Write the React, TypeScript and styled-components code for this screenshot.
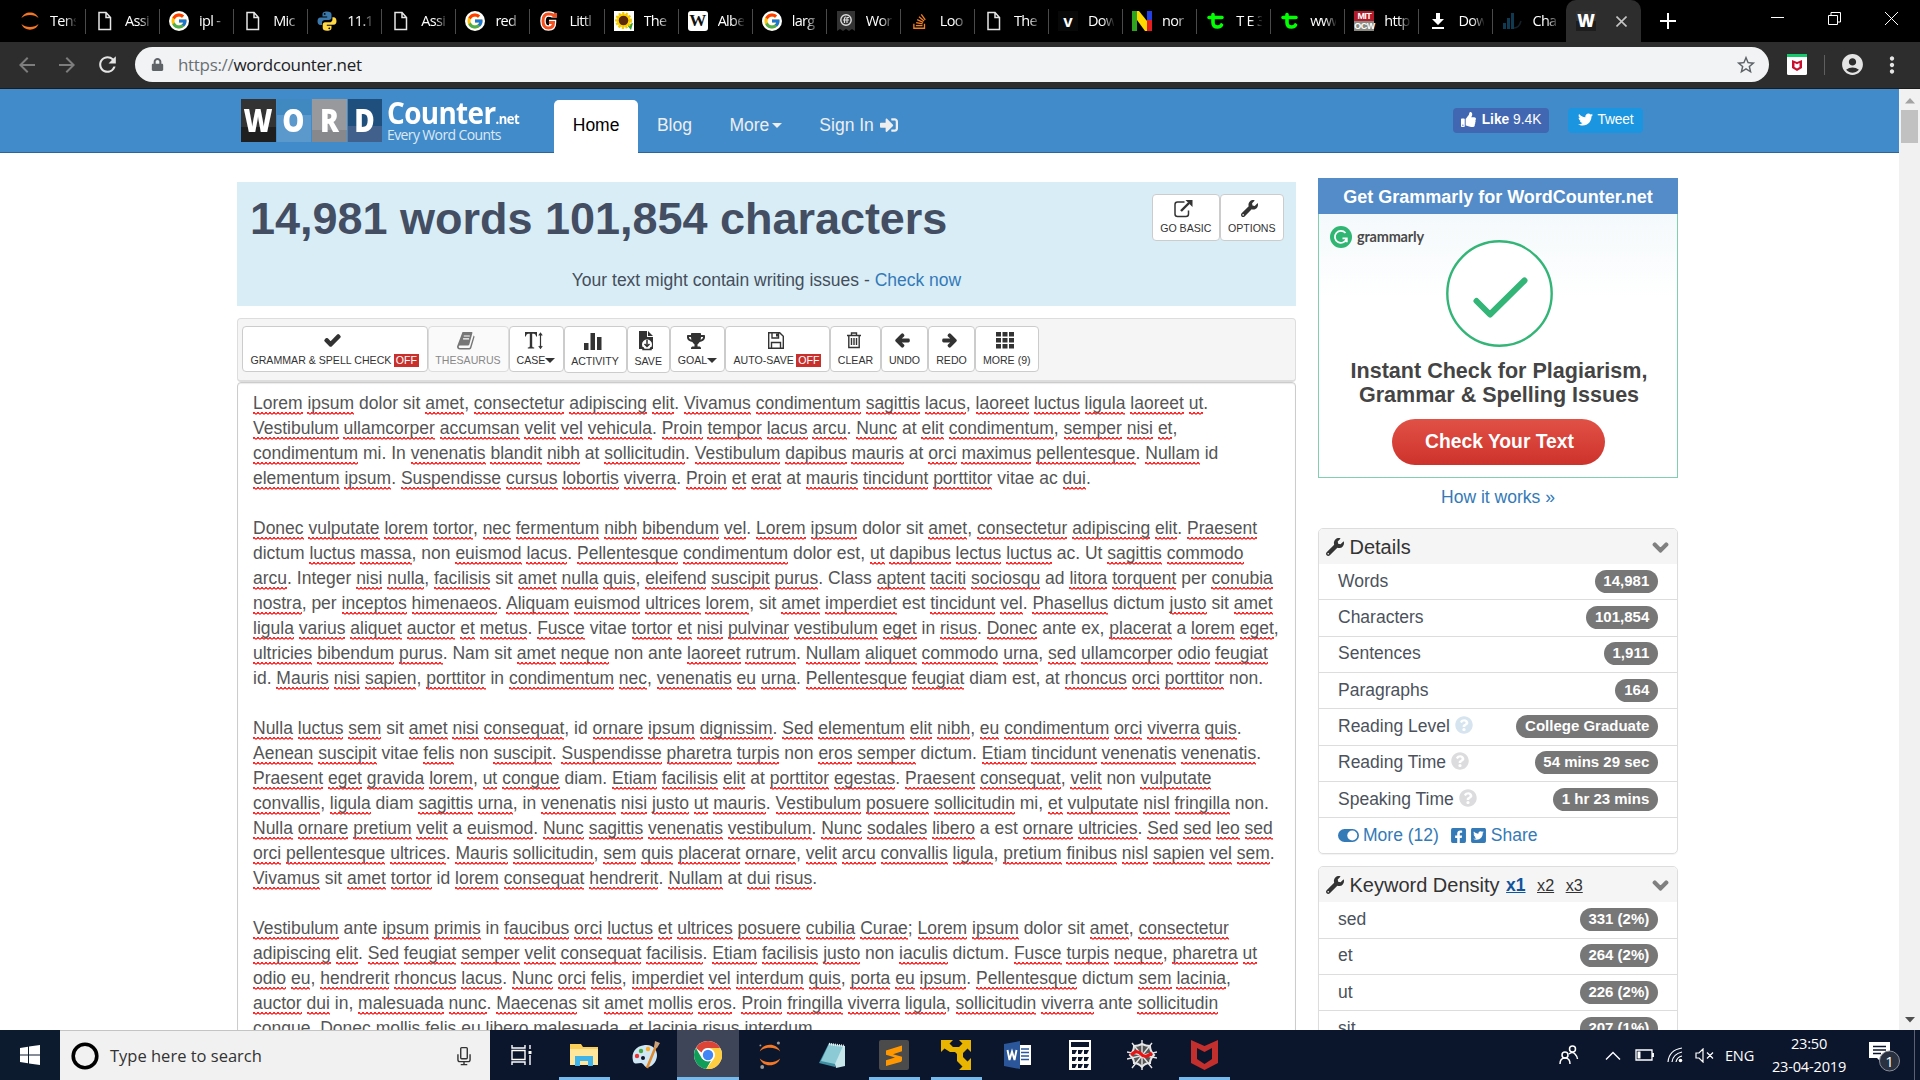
import React from "react";
import styled, { createGlobalStyle, css } from "styled-components";
import {
  FaCheck, FaTrophy, FaArrowLeft, FaArrowRight, FaWrench, FaChevronDown, FaQuestionCircle,
  FaFacebookSquare, FaTwitterSquare, FaTwitter, FaThumbsUp, FaStackOverflow, FaSignInAlt,
  FaLock,
} from "react-icons/fa";
import { FcGoogle } from "react-icons/fc";
import { MdAccountCircle, MdRefresh, MdStarBorder, MdArrowBack, MdArrowForward, MdMoreVert } from "react-icons/md";

const sans = `"Liberation Sans", Arial, sans-serif`;
const ui = `"Open Sans", "Noto Sans", sans-serif`;

const Global = createGlobalStyle`
  * { box-sizing: border-box; }
  html, body { margin: 0; padding: 0; overflow: hidden; background: #fff; }
  body { font-family: ${sans}; }
  svg { display: block; flex: none; }
`;

const Screen = styled.div`
  width: 1920px;
  height: 1080px;
  display: flex;
  flex-direction: column;
  overflow: hidden;
`;

/* ---------- browser chrome ---------- */
const TabStrip = styled.div`
  height: 42px;
  flex: none;
  background: #000;
  display: flex;
  align-items: stretch;
`;
const Tab = styled.div<{ $first?: boolean; $last?: boolean }>`
  width: ${(p) => (p.$first ? 86 : p.$last ? 72.5 : 74.08)}px;
  flex: none;
  padding-left: ${(p) => (p.$first ? 20 : 9)}px;
  display: flex;
  align-items: center;
  gap: 10px;
  background: linear-gradient(#4a4a4a, #4a4a4a) right 9px / 1px 25px no-repeat;
  ${(p) => p.$last && css`background: none;`}
`;
const TabIcon = styled.div`
  width: 20px;
  height: 20px;
  flex: none;
  display: flex;
  align-items: center;
  justify-content: center;
`;
const TabText = styled.div`
  width: 26px;
  overflow: hidden;
  white-space: nowrap;
  color: #fff;
  font: 14.5px/20px ${ui};
  letter-spacing: -0.7px;
  mask-image: linear-gradient(90deg, #000 55%, transparent 105%);
`;
const ActiveTab = styled.div`
  width: 75px;
  flex: none;
  background: #2d2d2d;
  border-radius: 10px 10px 0 0;
  display: flex;
  align-items: center;
  padding-left: 10px;
  gap: 20px;
`;
const WFavicon = styled.div`
  width: 20px;
  height: 20px;
  background: linear-gradient(#333 50%, #1d1d1d 50%);
  color: #fff;
  font: 800 17px/20px ${ui};
  text-align: center;
`;
const NewTab = styled.div`
  width: 54px;
  display: flex;
  align-items: center;
  justify-content: center;
`;
const WinButtons = styled.div`
  flex: 1;
  display: flex;
  justify-content: flex-end;
  height: 37px;
`;
const WinButton = styled.div`
  width: 57px;
  display: flex;
  align-items: center;
  justify-content: center;
`;
const AddressBar = styled.div`
  height: 47px;
  flex: none;
  background: #2d2d2d;
  border-bottom: 1px solid #1c1c1c;
  display: flex;
  align-items: center;
  padding: 0 0 1px 15px;
  color: #e4e4e4;
`;
const NavIcon = styled.div<{ $w: number; $c?: string }>`
  width: ${(p) => p.$w}px;
  flex: none;
  color: ${(p) => p.$c || "#e4e4e4"};
`;
const Omnibox = styled.div`
  width: 1634px;
  height: 35px;
  flex: none;
  border-radius: 18px;
  background: #f1f3f4;
  display: flex;
  align-items: center;
  padding: 0 12px 0 16px;
  color: #5f6368;
`;
const Url = styled.div`
  flex: 1;
  margin-left: 14px;
  font: 17px/24px ${ui};
  letter-spacing: -0.32px;
  color: #6b6f74;
  b { font-weight: 400; color: #202124; }
`;
const Extensions = styled.div`
  flex: 1;
  display: flex;
  align-items: center;
  padding-left: 18px;
`;
const VRule = styled.div`
  width: 1px;
  height: 20px;
  margin: 0 15px 0 17px;
  background: #5f5f5f;
`;

/* ---------- page ---------- */
const Viewport = styled.div`
  height: 941px;
  flex: none;
  display: flex;
  overflow: hidden;
`;
const Page = styled.div`
  width: 1899px;
  height: 941px;
  overflow: hidden;
  background: #fff;
`;
const ScrollTrack = styled.div`
  width: 21px;
  background: #f1f1f1;
  display: flex;
  flex-direction: column;
  align-items: center;
  padding: 9px 0 7px;
`;
const Thumb = styled.div`
  width: 17px;
  height: 33px;
  margin: 6px 0 auto;
  background: #c1c1c1;
`;
const Navbar = styled.div`
  height: 64px;
  background: #428bca;
  border-bottom: 1px solid #2c6699;
  padding-left: 241px;
  display: flex;
`;
const Logo = styled.div`
  width: 313px;
  margin-top: 10px;
  height: 44px;
  display: flex;
`;
const LogoBox = styled.div<{ $a: string; $b: string; $s: number }>`
  width: 34.5px;
  margin-right: 1px;
  height: 43px;
  background: linear-gradient(${(p) => p.$a} ${(p) => p.$s}%, ${(p) => p.$b} ${(p) => p.$s}%);
  color: #fff;
  font: 800 31px/42px ${ui};
  display: flex;
  justify-content: center;
  span { transform: scaleX(0.9); }
`;
const LogoWords = styled.div`
  margin-left: 4px;
  color: #fff;
  white-space: nowrap;
`;
const LogoTop = styled.div`
  font: 700 30px/28px ${ui};
  letter-spacing: -0.7px;
  height: 29px;
  transform: scaleX(0.93);
  transform-origin: left;
  span { font-size: 14px; letter-spacing: -0.5px; }
`;
const LogoSub = styled.div`
  font: 14px/14px ${ui};
  letter-spacing: -0.62px;
  color: #dce9f5;
`;
const NavTab = styled.div<{ $active?: boolean }>`
  height: 53px;
  margin-top: 11px;
  padding: 0 18.75px 3px;
  font-size: 17.5px;
  display: flex;
  align-items: center;
  white-space: nowrap;
  ${(p) =>
    p.$active
      ? css`background: #fff; color: #000; border-radius: 5px 5px 0 0;`
      : css`color: #eee;`}
`;
const Caret = styled.i<{ $s?: number }>`
  display: inline-block;
  border: ${(p) => p.$s || 5}px solid transparent;
  border-top-color: currentColor;
  border-bottom: 0;
`;
const Social = styled.div`
  margin: 19px 0 0 auto;
  padding-right: 256px;
  display: flex;
  gap: 19px;
`;
const SocialButton = styled.div<{ $bg: string; $w: number }>`
  width: ${(p) => p.$w}px;
  height: 25px;
  border-radius: 4px;
  background: ${(p) => p.$bg};
  color: #fff;
  display: flex;
  align-items: center;
  justify-content: center;
  gap: ${(p) => (p.$w > 80 ? 6 : 5)}px;
  font-size: 13.75px;
  letter-spacing: ${(p) => (p.$w > 80 ? 0 : -0.15)}px;
  line-height: 22px;
  white-space: nowrap;
  padding-bottom: 2px;
`;
const Columns = styled.div`
  display: flex;
  padding-left: 237px;
  gap: 22px;
`;
const Main = styled.div`
  width: 1059px;
  padding-top: 29px;
`;
const Counts = styled.div`
  height: 124px;
  background: #d9edf7;
  padding: 12px 12px 0 13px;
`;
const CountsTop = styled.div`
  display: flex;
  justify-content: space-between;
  height: 73.5px;
`;
const Heading = styled.div`
  font-weight: 700;
  font-size: 45px;
  line-height: 50px;
  letter-spacing: -0.02px;
  color: #444e63;
  white-space: nowrap;
`;
const Issues = styled.div`
  text-align: center;
  font-size: 17.5px;
  line-height: 25px;
  padding-right: 1px;
  color: #444e5a;
`;
const Link = styled.span`
  color: #337ab7;
`;
const ButtonRow = styled.div`
  display: flex;
  align-items: flex-start;
`;
const ToolButton = styled.div<{ $w: number; $h?: number; $off?: boolean }>`
  width: ${(p) => p.$w}px;
  height: ${(p) => p.$h || 46}px;
  flex: none;
  background: ${(p) => (p.$off ? "#fafafa" : "#fff")};
  color: ${(p) => (p.$off ? "#888" : "#333")};
  border: 1px solid ${(p) => (p.$off ? "#ddd" : "#ccc")};
  border-radius: 4px;
  display: flex;
  flex-direction: column;
  align-items: center;
  padding-top: 4px;
`;
const ToolIcon = styled.div<{ $bold?: boolean }>`
  height: 19px;
  margin-right: 4px;
  display: flex;
  align-items: center;
  ${(p) => p.$bold && css`svg { stroke: #333; stroke-width: 50px; overflow: visible; }`}
`;
const ToolLabel = styled.div<{ $up?: boolean }>`
  margin-top: auto;
  padding-bottom: ${(p) => (p.$up ? 5 : 4)}px;
  font-size: 10.6px;
  line-height: 13px;
  display: flex;
  align-items: center;
  white-space: nowrap;
`;
const OffTag = styled.span`
  background: #c9302c;
  color: #fff;
  margin-left: 2.5px;
  padding: 0 2px;
  line-height: 13.5px;
`;
const Toolbar = styled.div`
  margin-top: 12px;
  height: 64px;
  background: #f5f5f5;
  border: 1px solid #ddd;
  border-bottom: 2px solid #ddd;
  border-radius: 4px;
  padding: 7px 0 0 4px;
`;
const Editor = styled.div`
  height: 720px;
  border: 1px solid #ccc;
  border-radius: 4px 4px 0 0;
  box-shadow: inset 0 1px 1px rgba(0, 0, 0, 0.08);
  padding: 8px 0 0 15px;
  color: #555;
  font-size: 17.5px;
  line-height: 25px;
`;
const Line = styled.div`
  height: 25px;
  white-space: pre;
`;
const Misspelt = styled.span`
  padding-bottom: 2px;
  background:
    linear-gradient(#ff3a3a, #ff3a3a) 0 calc(100% - 1px) / 100% 1px no-repeat,
    linear-gradient(90deg, #ff2020 2px, transparent 2px) 0 calc(100% - 2px) / 4px 1px repeat-x,
    linear-gradient(90deg, transparent 2px, #ff8080 2px) 0 100% / 4px 1px repeat-x;
`;

/* ---------- sidebar ---------- */
const Side = styled.div`
  width: 360px;
  padding-top: 25px;
`;
const Ad = styled.div`
  height: 300px;
  border: 1px solid #80cfae;
  border-top: 0;
  background: linear-gradient(#f4f9fb 36px, #fff 120px);
`;
const AdTitle = styled.div`
  margin: 0 -1px;
  height: 36px;
  background: #538cc9;
  color: #fff;
  font-weight: 700;
  font-size: 18px;
  line-height: 38px;
  text-align: center;
`;
const AdBrand = styled.div`
  height: 26px;
  padding: 12px 0 0 11px;
  display: flex;
  gap: 5px;
  font: 700 14.5px/22px Lato, sans-serif;
  letter-spacing: -0.2px;
  color: #4a4a4a;
`;
const AdCircle = styled.div`
  height: 107px;
  display: flex;
  justify-content: center;
  padding-left: 3px;
`;
const AdHead = styled.div`
  margin-top: 12px;
  padding-left: 2px;
  text-align: center;
  font-weight: 700;
  font-size: 21.55px;
  line-height: 24px;
  color: #444;
  white-space: nowrap;
`;
const AdButton = styled.div`
  width: 213px;
  height: 46px;
  margin: 12px 0 0 73px;
  padding-left: 2px;
  border-radius: 23px;
  background: linear-gradient(#e15146, #cd322b);
  color: #fff;
  font-weight: 700;
  font-size: 19.3px;
  line-height: 45px;
  text-align: center;
`;
const HowItWorks = styled.div`
  height: 50px;
  padding-top: 6px;
  text-align: center;
  font-size: 17.5px;
  line-height: 26px;
  color: #337ab7;
`;
const Panel = styled.div`
  border: 1px solid #ddd;
  border-radius: 5px;
  overflow: hidden;
  margin-bottom: 12px;
  box-shadow: 0 1px 1px rgba(0, 0, 0, 0.05);
`;
const PanelHead = styled.div`
  height: 35px;
  background: #f5f5f5;
  color: #333;
  font-size: 20px;
  display: flex;
  align-items: center;
  padding: 1px 8px 0 7px;
  gap: 5.5px;
`;
const Chevron = styled(FaChevronDown)`
  color: #808080;
  stroke: #808080;
  stroke-width: 45px;
  overflow: visible;
`;
const DensityTab = styled.span<{ $on?: boolean }>`
  text-decoration: underline;
  font-size: ${(p) => (p.$on ? 17.5 : 16.2)}px;
  font-weight: ${(p) => (p.$on ? 700 : 400)};
  color: ${(p) => (p.$on ? "#0f549c" : "#333")};
  margin-left: ${(p) => (p.$on ? 1 : 6)}px;
  padding-top: 1px;
`;
const Spacer = styled.span`
  flex: 1;
`;
const Row = styled.div<{ $last?: boolean }>`
  height: ${(p) => (p.$last ? 35.2 : 36.32)}px;
  border-bottom: ${(p) => (p.$last ? 0 : 1)}px solid #ddd;
  padding: 0 19px 1px;
  display: flex;
  align-items: center;
  font-size: 17.5px;
  color: ${(p) => (p.$last ? "#337ab7" : "#4b525c")};
  white-space: nowrap;
`;
const Help = styled.span<{ $blue?: boolean }>`
  color: ${(p) => (p.$blue ? "#d6e4f0" : "#dcdcdf")};
  margin: -3px 0 0 5px;
`;
const Badge = styled.span`
  margin-left: auto;
  height: 23px;
  border-radius: 12px;
  padding: 0 8.75px;
  background: #777;
  color: #fff;
  font-weight: 700;
  font-size: 15px;
  line-height: 22.5px;
`;
const LinkIcon = styled.span<{ $l?: number; $r?: number }>`
  margin-left: ${(p) => p.$l || 0}px;
  margin-right: ${(p) => p.$r || 0}px;
`;

/* ---------- taskbar ---------- */
const Taskbar = styled.div`
  height: 50px;
  flex: none;
  background: #0b152c;
  display: flex;
  color: #fff;
`;
const Start = styled.div`
  width: 60px;
  background: #0d1b2f;
  display: flex;
  align-items: center;
  justify-content: center;
`;
const Search = styled.div`
  width: 430px;
  background: #f1f1f1;
  border-top: 1px solid #c4c4c4;
  display: flex;
  align-items: center;
  padding: 0 19px 0 11px;
  gap: 11px;
  font: 16.5px/24px ${ui};
  color: #333;
`;
const AppButton = styled.div<{ $w?: number; $on?: boolean; $open?: boolean }>`
  width: ${(p) => p.$w || 62}px;
  height: 50px;
  flex: none;
  display: flex;
  align-items: center;
  justify-content: center;
  background: ${(p) =>
    p.$on
      ? "linear-gradient(#76b9ed,#76b9ed) bottom / 100% 3px no-repeat, #3e4558"
      : p.$open
      ? "linear-gradient(#76b9ed,#76b9ed) bottom / 51px 3px no-repeat"
      : "none"};
`;
const Tray = styled.div`
  flex: 1;
  display: flex;
  align-items: center;
  justify-content: flex-end;
  font: 14.6px/22px ${ui};
  letter-spacing: -0.2px;
`;
const TrayItem = styled.div<{ $w: number }>`
  width: ${(p) => p.$w}px;
  display: flex;
  justify-content: center;
`;
const Clock = styled.div`
  width: 81px;
  text-align: center;
  white-space: nowrap;
  line-height: 23px;
  padding-bottom: 1px;
`;
const Notice = styled.div`
  width: 46.5px;
  display: flex;
  margin-left: 18px;
`;
const Edge = styled.div`
  width: 6px;
  height: 50px;
  border-left: 1px solid #5a6272;
`;

/* ---------- drawings ---------- */
const DocIcon = () => (
  <svg width="20" height="20" viewBox="0 0 20 20" fill="none" stroke="#e6e6e6" strokeWidth="1.5">
    <path d="M4 1.500h7l4.500 5v12H4z M11 1.500v5h4.500" />
  </svg>
);
const Jupyter = ({ s = 20, dots = false }: { s?: number; dots?: boolean }) => (
  <svg width={s} height={s} viewBox="0 0 20 20" fill="#f37726" overflow="visible">
    <path d="M1.500 7C4 -.5 16 -.5 18.500 7 14.500 3 5.500 3 1.500 7z" />
    <path d="M1.500 13c2.500 7.500 14.500 7.500 17 0-4 4-13 4-17 0z" />
    {dots && <g fill="#9a9a9a"><circle cx="17" cy="0" r="1.300" /><circle cx="3.500" cy="20" r="1.600" /><circle cx="2" cy="2" r=".8" /></g>}
  </svg>
);
const Python = () => (
  <svg width="20" height="20" viewBox="0 0 20 20">
    <path fill="#3b78ab" d="M10 .5C6.500.5 5.500 1.700 5.500 3.500V5.500H10.200v.9H3.500C1.500 6.400.5 8 .5 10.200S1.700 14 3.300 14H5v-2.300C5 9.800 6.300 8.900 8 8.900h4.200c1.400 0 2.300-1 2.300-2.300V3.500C14.500 1.500 13 .5 10 .5zM7.700 2a.9.900 0 110 1.800.9.900 0 010-1.800z" />
    <path fill="#ffd845" d="M10 19.700c3.500 0 4.500-1.200 4.500-3v-2H9.800v-.9h6.700c2 0 3-1.600 3-3.800S18.300 6.200 16.700 6.200H15.400v2.300c0 1.900-1.300 2.800-3 2.800H8c-1.400 0-2.300 1-2.300 2.300v3.100c0 2 1.300 3 4.300 3zm2.300-1.500a.9.900 0 110-1.800.9.900 0 010 1.800z" />
  </svg>
);
const Glyph = styled.div<{ $bg?: string; $c?: string; $f?: string; $round?: number }>`
  width: 20px;
  height: 20px;
  border-radius: ${(p) => p.$round || 0}px;
  background: ${(p) => p.$bg || "none"};
  color: ${(p) => p.$c || "#fff"};
  font: ${(p) => p.$f || `700 16px/20px ${sans}`};
  text-align: center;
  overflow: hidden;
  display: flex;
  align-items: center;
  justify-content: center;
`;
const GoogleTab = () => (
  <Glyph $bg="#fff" $round={10}><FcGoogle size={18} /></Glyph>
);
const Geeks = () => (
  <svg width="20" height="20" viewBox="0 0 20 20">
    <path d="M15 6.500V5Q14 3 9.500 3Q4 3 4 10t5.500 7q5 0 5-5.500H10" fill="none" stroke="#fff" strokeWidth="5.500" />
    <path d="M15 6.500V5Q14 3 9.500 3Q4 3 4 10t5.500 7q5 0 5-5.500H10M16.500 2v4.500" fill="none" stroke="#f4511e" strokeWidth="3" />
  </svg>
);
const Sunflower = () => (
  <svg width="20" height="20" viewBox="0 0 20 20">
    <rect width="20" height="20" fill="#fff" />
    <path d="M13 14l6-2-2 7z" fill="#2f9e2f" />
    <circle cx="9.500" cy="9.500" r="7" fill="#ffd900" stroke="#f4c900" strokeWidth="3" strokeDasharray="2 1.500" />
    <circle cx="9.500" cy="9.500" r="4.800" fill="#5c2a08" />
  </svg>
);
const Wol = () => (
  <svg width="18" height="20" viewBox="0 0 18 20">
    <path d="M0 0h18v20l-3-2-3 2-3-2-3 2-3-2-3 2z" fill="#333" />
    <circle cx="9" cy="9" r="5.200" fill="none" stroke="#ddd" strokeWidth="1.400" />
    <path d="M7.500 12V8q0-2 1.500-2M6 9h6M10 12V6.500h2" stroke="#ddd" fill="none" strokeWidth="1.200" />
  </svg>
);
const NIcon = () => (
  <svg width="20" height="20" viewBox="0 0 20 20">
    <path fill="#2fa51f" d="M0 0h5v20H0z" /><path fill="#ffd800" d="M5 0h2l8 10v10h-2L5 9z" />
    <path fill="#2340e6" d="M15 0h5v9h-5z" /><path fill="#e61e1e" d="M15 9h5v11h-5z" />
  </svg>
);
const Torrent = () => (
  <svg width="20" height="20" viewBox="0 0 20 20" fill="none" stroke="#0f0" strokeWidth="3.600" strokeLinecap="round">
    <path d="M7 3.500v8q0 4.500 4.500 4.500 3 0 4-2M3 6.500h13" />
  </svg>
);
const Mit = styled.div`
  width: 20px;
  height: 20px;
  color: #fff;
  font: 900 9px/10px ${sans};
  letter-spacing: -0.6px;
  text-align: center;
  background: linear-gradient(#b31b2b 50%, #8a8a80 50%);
`;
const Download = () => (
  <svg width="14" height="18" viewBox="0 0 14 18" fill="#fff"><path d="M5 1h4v6h4l-6 6-6-6h4zM1 15h12v2H1z" /></svg>
);
const Bars = () => (
  <svg width="20" height="18" viewBox="0 0 20 18"><path fill="#0f3a52" d="M1 11h3v6H1zM5 6h3v11H5zM9 1h3v16H9z" /><path stroke="#14202a" strokeWidth="1.500" d="M12 16q5 0 7-7" fill="none" /></svg>
);

const tabs: [React.ReactNode, string][] = [
  [<Jupyter />, "Tens"],
  [<DocIcon />, "Assi"],
  [<GoogleTab />, "ipl -"],
  [<DocIcon />, "Mic"],
  [<Python />, "11.1"],
  [<DocIcon />, "Assi"],
  [<GoogleTab />, "red"],
  [<Geeks />, "Littl"],
  [<Sunflower />, "The"],
  [<Glyph $bg="#fff" $c="#111" $round={3} $f={`700 17px/20px "Liberation Serif", serif`}>W</Glyph>, "Albe"],
  [<GoogleTab />, "larg"],
  [<Wol />, "Wor"],
  [<FaStackOverflow size={17} color="#f48024" />, "Loo"],
  [<DocIcon />, "The"],
  [<Glyph $bg="#080808" $f={`700 17px/19px ${sans}`}>v</Glyph>, "Dow"],
  [<NIcon />, "nor"],
  [<Torrent />, "T E 3"],
  [<Torrent />, "www"],
  [<Mit>MIT OCW</Mit>, "http"],
  [<Download />, "Dow"],
  [<Bars />, "Cha"],
];

const paragraphs = `Lorem ipsum dolor sit amet, consectetur adipiscing elit. Vivamus condimentum sagittis lacus, laoreet luctus ligula laoreet ut.
Vestibulum ullamcorper accumsan velit vel vehicula. Proin tempor lacus arcu. Nunc at elit condimentum, semper nisi et,
condimentum mi. In venenatis blandit nibh at sollicitudin. Vestibulum dapibus mauris at orci maximus pellentesque. Nullam id
elementum ipsum. Suspendisse cursus lobortis viverra. Proin et erat at mauris tincidunt porttitor vitae ac dui.

Donec vulputate lorem tortor, nec fermentum nibh bibendum vel. Lorem ipsum dolor sit amet, consectetur adipiscing elit. Praesent
dictum luctus massa, non euismod lacus. Pellentesque condimentum dolor est, ut dapibus lectus luctus ac. Ut sagittis commodo
arcu. Integer nisi nulla, facilisis sit amet nulla quis, eleifend suscipit purus. Class aptent taciti sociosqu ad litora torquent per conubia
nostra, per inceptos himenaeos. Aliquam euismod ultrices lorem, sit amet imperdiet est tincidunt vel. Phasellus dictum justo sit amet
ligula varius aliquet auctor et metus. Fusce vitae tortor et nisi pulvinar vestibulum eget in risus. Donec ante ex, placerat a lorem eget,
ultricies bibendum purus. Nam sit amet neque non ante laoreet rutrum. Nullam aliquet commodo urna, sed ullamcorper odio feugiat
id. Mauris nisi sapien, porttitor in condimentum nec, venenatis eu urna. Pellentesque feugiat diam est, at rhoncus orci porttitor non.

Nulla luctus sem sit amet nisi consequat, id ornare ipsum dignissim. Sed elementum elit nibh, eu condimentum orci viverra quis.
Aenean suscipit vitae felis non suscipit. Suspendisse pharetra turpis non eros semper dictum. Etiam tincidunt venenatis venenatis.
Praesent eget gravida lorem, ut congue diam. Etiam facilisis elit at porttitor egestas. Praesent consequat, velit non vulputate
convallis, ligula diam sagittis urna, in venenatis nisi justo ut mauris. Vestibulum posuere sollicitudin mi, et vulputate nisl fringilla non.
Nulla ornare pretium velit a euismod. Nunc sagittis venenatis vestibulum. Nunc sodales libero a est ornare ultricies. Sed sed leo sed
orci pellentesque ultrices. Mauris sollicitudin, sem quis placerat ornare, velit arcu convallis ligula, pretium finibus nisl sapien vel sem.
Vivamus sit amet tortor id lorem consequat hendrerit. Nullam at dui risus.

Vestibulum ante ipsum primis in faucibus orci luctus et ultrices posuere cubilia Curae; Lorem ipsum dolor sit amet, consectetur
adipiscing elit. Sed feugiat semper velit consequat facilisis. Etiam facilisis justo non iaculis dictum. Fusce turpis neque, pharetra ut
odio eu, hendrerit rhoncus lacus. Nunc orci felis, imperdiet vel interdum quis, porta eu ipsum. Pellentesque dictum sem lacinia,
auctor dui in, malesuada nunc. Maecenas sit amet mollis eros. Proin fringilla viverra ligula, sollicitudin viverra ante sollicitudin
congue. Donec mollis felis eu libero malesuada, et lacinia risus interdum.`.split("\n");

const known = new Set(
  "dolor sit est ac Ut Class ad per Integer dictum in In ante ex a diam at non mi id Nam vitae".split(" ")
);

const SpellLine = ({ text }: { text: string }) => (
  <Line>
    {text.split(/([A-Za-z]+)/).map((t, i) =>
      i % 2 && !known.has(t) ? <Misspelt key={i}>{t}</Misspelt> : t
    )}
  </Line>
);

const details: [string, string, string?][] = [
  ["Words", "14,981"],
  ["Characters", "101,854"],
  ["Sentences", "1,911"],
  ["Paragraphs", "164"],
  ["Reading Level", "College Graduate", "blue"],
  ["Reading Time", "54 mins 29 sec", "grey"],
  ["Speaking Time", "1 hr 23 mins", "grey"],
];
const density = [["sed", "331 (2%)"], ["et", "264 (2%)"], ["ut", "226 (2%)"], ["sit", "207 (1%)"]];

const BookIcon = () => (
  <svg width="18" height="18" viewBox="0 0 18 18">
    <path fill="#777" d="M5.500 0h9.200q1 0 .7 1L12.300 12.500q-.3 1-1.300 1H3q-1.300 0-1.300 1.200T3 16h9q.8 0 1-.8L16.600 3.500q1.200.5.9 1.600l-3.200 11q-.4 1.400-1.800 1.400H3Q0 17.500 0 14.500z" />
    <path stroke="#fff" strokeWidth="1.200" d="M6.800 4h6M6.100 6.800h6" />
  </svg>
);
const TextHeight = () => (
  <svg width="18" height="18" viewBox="0 0 18 18">
    <path fill="#333" d="M0 0h12v4.500h-.8q-.5-2.800-2.200-2.800H7.200v12.500q0 1.300 2 1.300v1H2.800v-1q2 0 2-1.300V1.700H3Q1.300 1.700.8 4.500H0z" />
    <path d="M15.500 2v13M13.800 3.500l1.700-2.200 1.700 2.200M13.800 14l1.700 2.200 1.700-2.200" fill="none" stroke="#333" strokeWidth="1.200" />
  </svg>
);
const Activity = () => (
  <svg width="18" height="19" viewBox="0 -1 18 19" fill="#333"><path d="M0 11h4.500v7H0zM6.500 1h4.500v17H6.500zM13 5h4.500v13H13z" /></svg>
);
const SaveDoc = () => (
  <svg width="16" height="20" viewBox="0 0 16 20">
    <path fill="#333" d="M1 0h8v6h6v12H1z M10 0l5 5h-5z" />
    <circle cx="9" cy="13.500" r="5" fill="#fff" /><path d="M9 9v6M6.500 13L9 15.500l2.500-2.500M5 16v2.500h8V16" fill="none" stroke="#333" strokeWidth="1.500" />
  </svg>
);
const Floppy = () => (
  <svg width="16" height="17" viewBox="0 0 16 17" fill="none" stroke="#333" strokeWidth="1.400">
    <path d="M.7.7h11l3.600 3.600v12H.7zM4 .7V6h6.500V.7M3.500 16v-5.500h9V16" /><path d="M8 1.500h2v3H8z" fill="#333" stroke="none" />
  </svg>
);
const Trash = () => (
  <svg width="14" height="17" viewBox="0 0 14 17" fill="none" stroke="#333" strokeWidth="1.400">
    <path d="M0 3.500h14M4.500 3V1h5v2M1.800 3.500v12h10.400v-12M4.500 6v7M7 6v7M9.500 6v7" />
  </svg>
);
const GridIcon = () => (
  <svg width="18" height="17" viewBox="0 0 18 17" fill="#333"><path d="M0 0h5v4.500H0zM6.500 0h5v4.500h-5zM13 0h5v4.500h-5zM0 6h5v4.500H0zM6.500 6h5v4.500h-5zM13 6h5v4.500h-5zM0 12h5v4.500H0zM6.500 12h5v4.500h-5zM13 12h5v4.500h-5z" /></svg>
);
const OpenIcon = () => (
  <svg width="19" height="18" viewBox="0 0 19 18" fill="none" stroke="#333" strokeWidth="1.500">
    <path d="M10.500 2H3.500Q1 2 1 4.500v9.500Q1 16.500 3.500 16.500h8.500q2.500 0 2.500-2.500V10.500" />
    <path d="M7 11L15 3" strokeWidth="2.400" /><path d="M11.500 0H18.500v7z" fill="#333" stroke="none" />
  </svg>
);
const ToggleIcon = () => (
  <svg width="21" height="13" viewBox="0 0 21 13"><rect width="21" height="13" rx="6.500" fill="#337ab7" /><circle cx="14.300" cy="6.500" r="5" fill="#fff" /></svg>
);

const apps: [React.ReactNode, { on?: boolean; open?: boolean }][] = [
  [<svg width="28" height="24" viewBox="0 0 28 24"><path fill="#f9cf5a" d="M0 1h11l2 3h15v18H0z" /><path fill="#ffe69a" d="M0 6h28v16H0z" /><path fill="#3fb3ea" d="M5 23V13h18v10h-5v-5h-8v5z" /></svg>, { open: true }],
  [<svg width="30" height="28" viewBox="0 0 30 28"><path fill="#cfe6f4" d="M14 4C4 5 0 12 2 20c1 4 5 2 8 2s3 5 7 4c6-1 9-7 9-12S22 3 14 4z" /><circle cx="6" cy="15" r="2.200" fill="#e33" /><circle cx="10" cy="10" r="2.200" fill="#4a4" /><circle cx="17" cy="8" r="2.200" fill="#fa2" /><circle cx="12" cy="17" r="2" fill="#0b152c" /><path d="M25 5L16 27" stroke="#e08a2e" strokeWidth="2.500" /><path d="M23 6l1-6 5 2-3 5z" fill="#c9a27a" /></svg>, {}],
  [<svg width="28" height="28" viewBox="0 0 28 28"><circle cx="14" cy="14" r="14" fill="#fff" /><path fill="#db4437" d="M14 0a14 14 0 0112.100 7H14a7 7 0 00-6.500 4.400L2 7A14 14 0 0114 0z" /><path fill="#0f9d58" d="M1.900 7a14 14 0 0010.300 20.900l6-10.400A7 7 0 017.900 17.500z" /><path fill="#ffcd40" d="M26.100 7H14a7 7 0 016 10.500L12.200 28A14 14 0 0026.100 7z" /><circle cx="14" cy="14" r="6.500" fill="#fff" /><circle cx="14" cy="14" r="5.200" fill="#4285f4" /></svg>, { on: true }],
  [<Jupyter s={24} dots />, {}],
  [<svg width="28" height="27" viewBox="0 0 28 27"><path d="M11 1L1 21l16 4L24 4z" fill="#3f8fa3" /><path d="M12 2l15 2v20l-9 2z" fill="#c7e6ea" /><path d="M11 2L3 19l14 3 8-18z" fill="#8ccbd6" /><path d="M11 2l15 2" stroke="#eee" strokeWidth="2.500" strokeDasharray="1 1" /></svg>, {}],
  [<svg width="30" height="30" viewBox="0 0 30 30"><rect width="30" height="30" rx="2" fill="#4b4b4b" /><path fill="#ff9800" d="M7 10.500L23 5.500v5.800l-9 2.900 9 2.600v3.200q0 1.500-1.500 2L7 26v-5.800l9-2.700-9-2.700z" /></svg>, { open: true }],
  [<svg width="30" height="30" viewBox="0 0 30 30"><path fill="#e9b500" d="M0 0h12l-3.500 3.500L12 7h6l3.500-3.500L18 0h12v12l-3.500-3.500L22 13v4l4.500 4.500L30 18v12H18l3.500-3.500L16 21v-7l-2-2H9L3.500 8.500 0 12z" /></svg>, { open: true }],
  [<svg width="28" height="28" viewBox="0 0 28 28"><path d="M14 4h13v20H14z" fill="#fff" /><path d="M17 8h8M17 11.500h8M17 15h8M17 18.500h8" stroke="#2b579a" strokeWidth="1.300" /><path d="M0 3l16-3v28L0 25z" fill="#2b579a" /><path d="M3.500 9l2 10L8 10.500 10.500 19l2-10" fill="none" stroke="#fff" strokeWidth="1.900" /></svg>, {}],
  [<svg width="22" height="30" viewBox="0 0 22 30"><path fill="#fff" d="M0 0h22v30H0z" /><path fill="#0b152c" d="M2 2h18v5H2zM3 10h5l-2 4H3zM9 10h5l-2 4H9zM15 10h5l-2 4h-3zM3 17h5l-2 4H3zM9 17h5l-2 4H9zM15 17h5l-2 4h-3zM3 24h5l-2 4H3zM9 24h5l-2 4H9zM15 24h5l-2 4h-3z" /></svg>, {}],
  [<svg width="30" height="30" viewBox="0 0 30 30" fill="none" stroke="#e6e6e6" strokeWidth="1.400"><path fill="#555" strokeWidth="2" d="M15 4q4 2 8 2 0 5 4 9-4 4-4 8-5 0-8 4-4-4-8-4 0-4-4-8 4-4 4-9 4 0 8-2z" /><path d="M15 0v30M0 12l30 6M0 19l30-7M5 3l20 25M25 3L5 28" /><path d="M4 15q6-6 10-1t11-1" stroke="#e11" strokeWidth="3.200" /></svg>, {}],
  [<svg width="27" height="30" viewBox="0 0 27 30"><path fill="#c22f2d" d="M0 0l13.500 6L27 0v23l-13.500 7L0 23z" /><path fill="#0b152c" d="M6 8l7.500 4L21 8v11l-7.500 5L6 19z" /></svg>, { open: true }],
];

export default function App() {
  return (
    <Screen>
      <Global />
      <TabStrip>
        {tabs.map(([icon, label], i) => (
          <Tab key={i} $first={i === 0} $last={i === tabs.length - 1}>
            <TabIcon>{icon}</TabIcon>
            <TabText>{label}</TabText>
          </Tab>
        ))}
        <ActiveTab>
          <WFavicon>W</WFavicon>
          <svg width="11" height="11" viewBox="0 0 11 11" stroke="#c4c4c4" strokeWidth="1.600"><path d="M.5.5l10 10M10.500.5l-10 10" /></svg>
        </ActiveTab>
        <NewTab>
          <svg width="16" height="16" viewBox="0 0 16 16" stroke="#fff" strokeWidth="2"><path d="M8 0v16M0 8h16" /></svg>
        </NewTab>
        <WinButtons>
          <WinButton><svg width="13" height="13" viewBox="0 0 13 13" stroke="#fff"><path d="M0 5.500h13" /></svg></WinButton>
          <WinButton><svg width="13" height="13" viewBox="0 0 13 13" stroke="#fff" fill="none"><path d="M.5 3.500h9v9h-9zM3 3V.5h9.500V10H10" /></svg></WinButton>
          <WinButton><svg width="13" height="13" viewBox="0 0 13 13" stroke="#fff"><path d="M0 0l13 13M13 0L0 13" /></svg></WinButton>
        </WinButtons>
      </TabStrip>
      <AddressBar>
        <NavIcon $w={40} $c="#7d7d7d"><MdArrowBack size={24} /></NavIcon>
        <NavIcon $w={40} $c="#7d7d7d"><MdArrowForward size={24} /></NavIcon>
        <NavIcon $w={40}><MdRefresh size={25} /></NavIcon>
        <Omnibox>
          <FaLock size={13} />
          <Url>https://<b>wordcounter.net</b></Url>
          <MdStarBorder size={22} />
        </Omnibox>
        <Extensions>
          <svg width="20" height="21" viewBox="0 0 20 21"><rect width="20" height="21" rx="1.500" fill="#fff" /><path d="M0 0h20v3H0z" fill="#14c96b" /><path fill="#c8102e" d="M5 6l5 2 5-2v8l-5 3-5-3z" /><path fill="#fff" d="M7.500 9l2.500 1.300L12.500 9v4L10 14.600 7.500 13z" /></svg>
          <VRule />
          <MdAccountCircle size={25} />
          <NavIcon $w={14} />
          <MdMoreVert size={26} />
        </Extensions>
      </AddressBar>
      <Viewport>
        <Page>
          <Navbar>
            <Logo>
              <LogoBox $a="#333" $b="#1f1f1f" $s={66}><span>W</span></LogoBox>
              <LogoBox $a="#4089c0" $b="#5b98cc" $s={38}><span>O</span></LogoBox>
              <LogoBox $a="#98999d" $b="#87888c" $s={72}><span>R</span></LogoBox>
              <LogoBox $a="#1f4f7c" $b="#41608c" $s={62}><span>D</span></LogoBox>
              <LogoWords>
                <LogoTop>Counter<span>.net</span></LogoTop>
                <LogoSub>Every Word Counts</LogoSub>
              </LogoWords>
            </Logo>
            <NavTab $active>Home</NavTab>
            <NavTab>Blog</NavTab>
            <NavTab>More<LinkIcon $l={2.5} /><Caret /></NavTab>
            <NavTab>Sign In<LinkIcon $l={6}><FaSignInAlt size={18} /></LinkIcon></NavTab>
            <Social>
              <SocialButton $bg="#4267b2" $w={96}><FaThumbsUp size={15} /><span><b>Like</b> 9.4K</span></SocialButton>
              <SocialButton $bg="#1b95e0" $w={75}><FaTwitter size={15} /><span>Tweet</span></SocialButton>
            </Social>
          </Navbar>
          <Columns>
            <Main>
              <Counts>
                <CountsTop>
                  <Heading>14,981 words 101,854 characters</Heading>
                  <ButtonRow>
                    <ToolButton $w={67.5} $h={47}><ToolIcon><OpenIcon /></ToolIcon><ToolLabel $up>GO BASIC</ToolLabel></ToolButton>
                    <ToolButton $w={64.5} $h={47}><ToolIcon><FaWrench size={17} /></ToolIcon><ToolLabel $up>OPTIONS</ToolLabel></ToolButton>
                  </ButtonRow>
                </CountsTop>
                <Issues>Your text might contain writing issues - <Link>Check now</Link></Issues>
              </Counts>
              <Toolbar>
                <ButtonRow>
                  <ToolButton $w={185.5}><ToolIcon $bold><FaCheck size={15} /></ToolIcon><ToolLabel>GRAMMAR &amp; SPELL CHECK<OffTag>OFF</OffTag></ToolLabel></ToolButton>
                  <ToolButton $w={81} $off><ToolIcon><BookIcon /></ToolIcon><ToolLabel>THESAURUS</ToolLabel></ToolButton>
                  <ToolButton $w={55}><ToolIcon><TextHeight /></ToolIcon><ToolLabel>CASE<Caret /></ToolLabel></ToolButton>
                  <ToolButton $w={63} $h={47}><ToolIcon><Activity /></ToolIcon><ToolLabel>ACTIVITY</ToolLabel></ToolButton>
                  <ToolButton $w={43.5} $h={47}><ToolIcon><SaveDoc /></ToolIcon><ToolLabel>SAVE</ToolLabel></ToolButton>
                  <ToolButton $w={55}><ToolIcon><FaTrophy size={18} /></ToolIcon><ToolLabel>GOAL<Caret /></ToolLabel></ToolButton>
                  <ToolButton $w={105}><ToolIcon><Floppy /></ToolIcon><ToolLabel>AUTO-SAVE<OffTag>OFF</OffTag></ToolLabel></ToolButton>
                  <ToolButton $w={51}><ToolIcon><Trash /></ToolIcon><ToolLabel>CLEAR</ToolLabel></ToolButton>
                  <ToolButton $w={47}><ToolIcon $bold><FaArrowLeft size={15} /></ToolIcon><ToolLabel>UNDO</ToolLabel></ToolButton>
                  <ToolButton $w={47}><ToolIcon $bold><FaArrowRight size={15} /></ToolIcon><ToolLabel>REDO</ToolLabel></ToolButton>
                  <ToolButton $w={63.5}><ToolIcon><GridIcon /></ToolIcon><ToolLabel>MORE (9)</ToolLabel></ToolButton>
                </ButtonRow>
              </Toolbar>
              <Editor>
                {paragraphs.map((l, i) => <SpellLine key={i} text={l} />)}
              </Editor>
            </Main>
            <Side>
              <Ad>
                <AdTitle>Get Grammarly for WordCounter.net</AdTitle>
                <AdBrand>
                  <svg width="22" height="22" viewBox="0 0 22 22"><circle cx="11" cy="11" r="11" fill="#2fb673" /><path d="M15.500 7A6 6 0 1016.500 13M12.500 12.300h4.300v4" fill="none" stroke="#fff" strokeWidth="1.800" /></svg>
                  grammarly
                </AdBrand>
                <AdCircle>
                  <svg width="107" height="107" viewBox="0 0 107 107" fill="none" stroke="#33b577">
                    <circle cx="53.500" cy="53.500" r="52.200" strokeWidth="2.400" fill="#fff" />
                    <path d="M30.500 61l13.500 13.500 34.500-34" strokeWidth="6" strokeLinecap="round" strokeLinejoin="round" />
                  </svg>
                </AdCircle>
                <AdHead>Instant Check for Plagiarism,<br />Grammar &amp; Spelling Issues</AdHead>
                <AdButton>Check Your Text</AdButton>
              </Ad>
              <HowItWorks>How it works »</HowItWorks>
              <Panel>
                <PanelHead><FaWrench size={18} />Details<Spacer /><Chevron size={17} /></PanelHead>
                {details.map(([k, v, h]) => (
                  <Row key={k}>
                    {k}
                    {h && <Help $blue={h === "blue"}><FaQuestionCircle size={18} /></Help>}
                    <Badge>{v}</Badge>
                  </Row>
                ))}
                <Row $last>
                  <LinkIcon $r={4}><ToggleIcon /></LinkIcon>More (12)
                  <LinkIcon $l={11} $r={3}><FaFacebookSquare size={17} /></LinkIcon>
                  <LinkIcon $r={4}><FaTwitterSquare size={17} /></LinkIcon>Share
                </Row>
              </Panel>
              <Panel>
                <PanelHead>
                  <FaWrench size={18} />Keyword Density
                  <DensityTab $on>x1</DensityTab><DensityTab>x2</DensityTab><DensityTab>x3</DensityTab>
                  <Spacer /><Chevron size={17} />
                </PanelHead>
                {density.map(([k, v]) => <Row key={k}>{k}<Badge>{v}</Badge></Row>)}
              </Panel>
            </Side>
          </Columns>
        </Page>
        <ScrollTrack>
          <svg width="10" height="6" viewBox="0 0 10 6" fill="#a3a3a3"><path d="M0 5.500L5 0l5 5.500z" /></svg>
          <Thumb />
          <svg width="10" height="6" viewBox="0 0 10 6" fill="#505050"><path d="M0 0h10L5 5.500z" /></svg>
        </ScrollTrack>
      </Viewport>
      <Taskbar>
        <Start>
          <svg width="20" height="20" viewBox="0 0 20 20" fill="#fff"><path d="M0 3l8-1.200v7.700H0zM9 1.600L20 0v9.500H9zM0 10.500h8v7.700L0 17zM9 10.500h11V20L9 18.400z" /></svg>
        </Start>
        <Search>
          <svg width="28" height="28" viewBox="0 0 28 28"><circle cx="14" cy="14" r="11.800" fill="none" stroke="#000" strokeWidth="3.600" /></svg>
          Type here to search
          <Spacer />
          <svg width="14" height="20" viewBox="0 0 15 20" fill="none" stroke="#333" strokeWidth="1.500"><rect x="4" y="1" width="7" height="12" rx="1" /><path d="M1 8v6q0 2 2 2h9q2 0 2-2V8M7.500 16v3M4 19.200h7" /></svg>
        </Search>
        <AppButton $w={63}>
          <svg width="21" height="20" viewBox="0 0 21 20" fill="none" stroke="#fff" strokeWidth="1.400"><path d="M1 0v3h13V0M1 5.500h13v9H1zM1 20v-3h13v3M19 0v4M19 10v10" /><path d="M17.500 6h3v3h-3z" fill="#fff" stroke="none" /></svg>
        </AppButton>
        {apps.map(([icon, o], i) => <AppButton key={i} $on={o.on} $open={o.open}>{icon}</AppButton>)}
        <Tray>
          <TrayItem $w={42}>
            <svg width="20" height="21" viewBox="0 0 20 21" fill="none" stroke="#fff" strokeWidth="1.500"><circle cx="13.500" cy="4" r="3" /><circle cx="6" cy="10" r="3" /><path d="M1 19q0-6 5-6t5 6M10 9q3.500-3 6 0 2 2 2.500 5" /></svg>
          </TrayItem>
          <TrayItem $w={47}><svg width="16" height="9" viewBox="0 0 16 9" fill="none" stroke="#fff" strokeWidth="1.400"><path d="M1 8.500l7-7 7 7" /></svg></TrayItem>
          <TrayItem $w={15}><svg width="19" height="12" viewBox="0 0 19 12" fill="none" stroke="#fff" strokeWidth="1.300"><path d="M1 1h16v10H1zM18.300 4v4" /><path d="M2.500 2.500h3v7h-3z" fill="#fff" stroke="none" /></svg></TrayItem>
          <TrayItem $w={47}><svg width="16" height="16" viewBox="0 0 16 16" fill="none" stroke="#fff" strokeWidth="1.200"><path d="M1 15Q2 3 15 1M5 15q1-8 10-10M9 15q1-5 6-6" /><circle cx="13.500" cy="13.500" r="1.800" fill="#fff" stroke="none" /></svg></TrayItem>
          <TrayItem $w={12}><svg width="20" height="15" viewBox="0 0 20 15" fill="none" stroke="#fff" strokeWidth="1.200"><path d="M1 5h3l4-4v13l-4-4H1zM12 4.500l6 6M18 4.500l-6 6" /></svg></TrayItem>
          <TrayItem $w={58}>ENG</TrayItem>
          <Clock>23:50<br />23-04-2019</Clock>
          <Notice>
            <svg width="34" height="34" viewBox="0 0 34 34">
              <path d="M1 4h21v16h-8v5l-5-5H1z" fill="#fff" /><path d="M5 8.500h13M5 12h13M5 15.500h8" stroke="#0b152c" strokeWidth="1.500" />
              <circle cx="21.500" cy="23" r="10" fill="#2a3140" stroke="#8a8f99" />
              <text x="21.500" y="28.500" fill="#fff" fontSize="15" textAnchor="middle" fontFamily="Open Sans">1</text>
            </svg>
          </Notice>
          <Edge />
        </Tray>
      </Taskbar>
    </Screen>
  );
}
